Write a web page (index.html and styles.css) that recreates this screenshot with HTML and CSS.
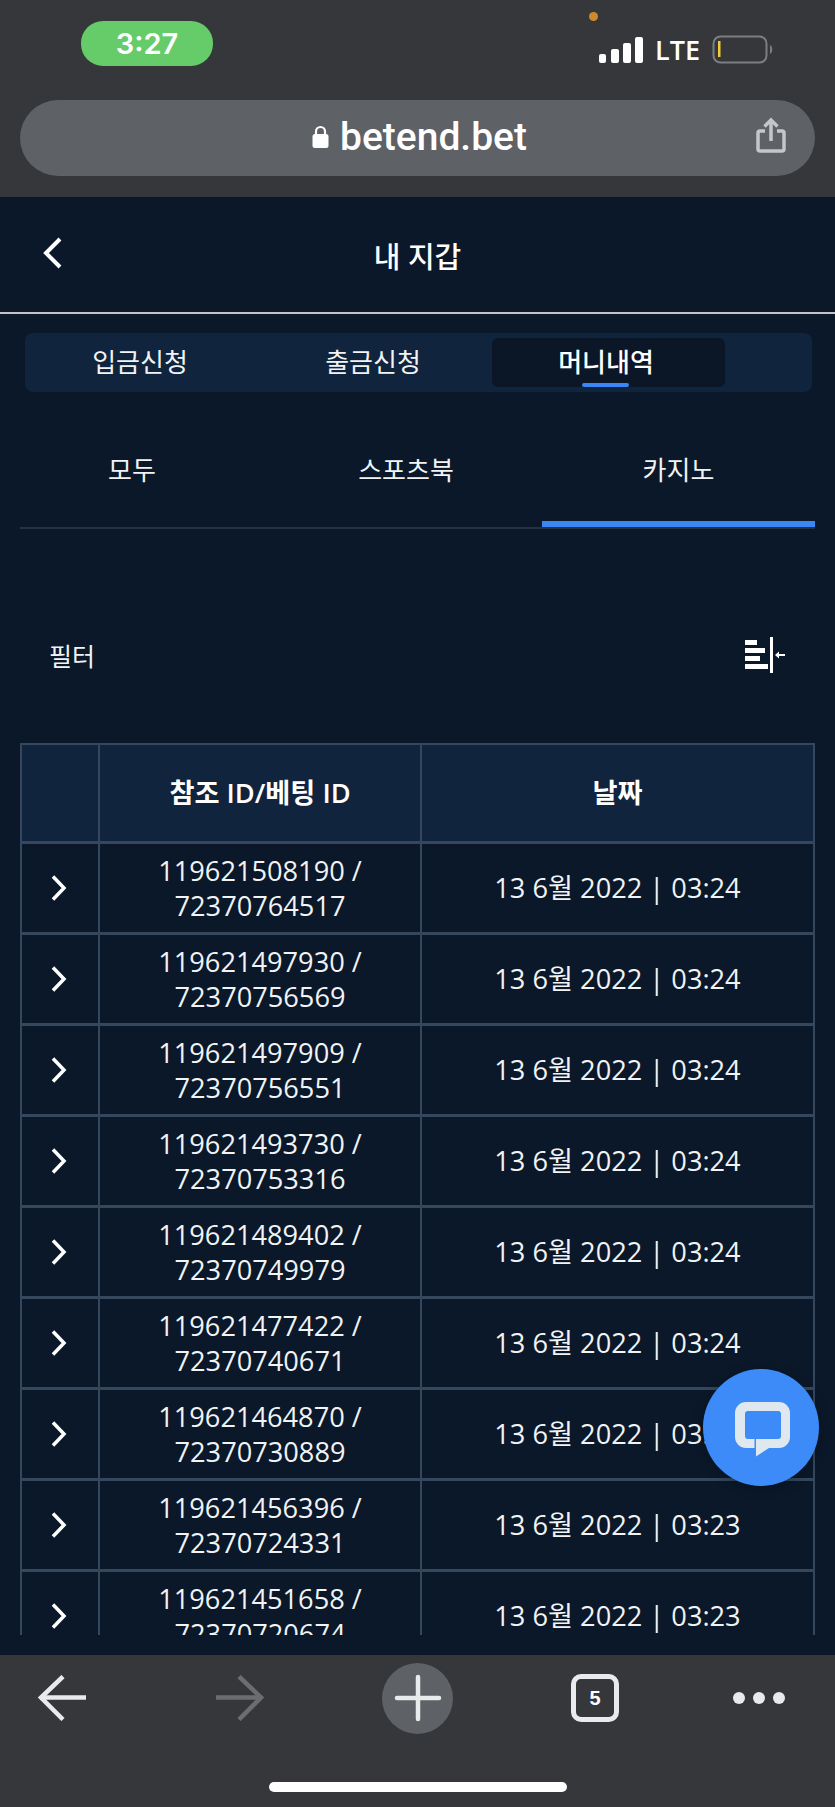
FILE: index.html
```html
<!DOCTYPE html>
<html lang="ko">
<head>
    <meta charset="UTF-8">
    <title>내 지갑</title>
    <link rel="stylesheet" href="styles.css">
</head>
<body>

<div class="browser-top">
    <div class="status">
        <div class="time">3:27</div>
        <div class="status-right">
            <span class="cam-dot"></span>
            <svg class="signal" width="44" height="28" viewBox="0 0 44 28">
                <rect x="0" y="18" width="7" height="9" rx="2"/>
                <rect x="12" y="13" width="8" height="14" rx="2"/>
                <rect x="24" y="7" width="8" height="20" rx="2"/>
                <rect x="36" y="1" width="8" height="26" rx="2"/>
            </svg>
            <span class="lte">LTE</span>
            <svg class="battery" width="62" height="30" viewBox="0 0 62 30">
                <rect x="1.500" y="1.500" width="53" height="26" rx="7" fill="none" stroke="#7d7e80" stroke-width="2"/>
                <rect x="6" y="6" width="2.500" height="16" fill="#f2cb3d"/>
                <path d="M58 10c3 1 3 8 0 9z" fill="#7d7e80"/>
            </svg>
        </div>
    </div>
    <div class="url-bar">
        <svg class="lock" width="17" height="23" viewBox="0 0 17 23">
            <path d="M4 10V6.500a4.500 4.500 0 0 1 9 0V10" fill="none" stroke="#fff" stroke-width="2.200"/>
            <rect x="0.500" y="9" width="16" height="14" rx="2.500" fill="#fff"/>
        </svg>
        <span class="url-text">betend.bet</span>
        <svg class="share" width="30" height="36" viewBox="0 0 30 36" fill="none" stroke="#c3c6ca" stroke-width="3.500">
            <path d="M9 14H4a2 2 0 0 0-2 2v16a2 2 0 0 0 2 2h22a2 2 0 0 0 2-2V16a2 2 0 0 0-2-2H21"/>
            <path d="M15 24V3M8.500 9.500L15 3l6.500 6.500"/>
        </svg>
    </div>
</div>

<div class="page">
    <div class="page-header">
        <svg class="back" width="20" height="32" viewBox="0 0 20 32">
            <path d="M18 2L4 16l14 14" fill="none" stroke="#fff" stroke-width="4"/>
        </svg>
        <h1>내 지갑</h1>
    </div>

    <div class="wallet-tabs">
        <div class="wallet-tab">입금신청</div>
        <div class="wallet-tab">출금신청</div>
        <div class="wallet-tab active">머니내역</div>
    </div>

    <div class="sub-tabs">
        <div class="sub-tab all">모두</div>
        <div class="sub-tab sports">스포츠북</div>
        <div class="sub-tab casino active">카지노</div>
    </div>

    <div class="filter-row">
        <span>필터</span>
        <svg width="40" height="36" viewBox="0 0 40 36">
            <g fill="#fff">
                <rect x="0" y="3" width="12" height="5"/>
                <rect x="0" y="11" width="20" height="5"/>
                <rect x="0" y="19" width="15" height="5"/>
                <rect x="0" y="27" width="23" height="5"/>
                <rect x="25" y="0" width="3" height="36"/>
                <rect x="32" y="17" width="8" height="2"/>
                <path d="M30 18l4-3.500v7z"/>
            </g>
        </svg>
    </div>

    <div class="table-wrap">
        <table>
            <colgroup>
                <col class="col-arrow">
                <col class="col-ref">
                <col class="col-date">
            </colgroup>
            <thead>
                <tr>
                    <th></th>
                    <th>참조 ID/베팅 ID</th>
                    <th>날짜</th>
                </tr>
            </thead>
            <tbody>
                <tr><td><svg class="chev" width="16" height="26" viewBox="0 0 16 26"><path d="M2 1.500L13 13 2 24.500" fill="none" stroke="#fff" stroke-width="3.500"/></svg></td><td>119621508190 /<br>72370764517</td><td>13 6월 2022 | 03:24</td></tr>
                <tr><td><svg class="chev" width="16" height="26" viewBox="0 0 16 26"><path d="M2 1.500L13 13 2 24.500" fill="none" stroke="#fff" stroke-width="3.500"/></svg></td><td>119621497930 /<br>72370756569</td><td>13 6월 2022 | 03:24</td></tr>
                <tr><td><svg class="chev" width="16" height="26" viewBox="0 0 16 26"><path d="M2 1.500L13 13 2 24.500" fill="none" stroke="#fff" stroke-width="3.500"/></svg></td><td>119621497909 /<br>72370756551</td><td>13 6월 2022 | 03:24</td></tr>
                <tr><td><svg class="chev" width="16" height="26" viewBox="0 0 16 26"><path d="M2 1.500L13 13 2 24.500" fill="none" stroke="#fff" stroke-width="3.500"/></svg></td><td>119621493730 /<br>72370753316</td><td>13 6월 2022 | 03:24</td></tr>
                <tr><td><svg class="chev" width="16" height="26" viewBox="0 0 16 26"><path d="M2 1.500L13 13 2 24.500" fill="none" stroke="#fff" stroke-width="3.500"/></svg></td><td>119621489402 /<br>72370749979</td><td>13 6월 2022 | 03:24</td></tr>
                <tr><td><svg class="chev" width="16" height="26" viewBox="0 0 16 26"><path d="M2 1.500L13 13 2 24.500" fill="none" stroke="#fff" stroke-width="3.500"/></svg></td><td>119621477422 /<br>72370740671</td><td>13 6월 2022 | 03:24</td></tr>
                <tr><td><svg class="chev" width="16" height="26" viewBox="0 0 16 26"><path d="M2 1.500L13 13 2 24.500" fill="none" stroke="#fff" stroke-width="3.500"/></svg></td><td>119621464870 /<br>72370730889</td><td>13 6월 2022 | 03:24</td></tr>
                <tr><td><svg class="chev" width="16" height="26" viewBox="0 0 16 26"><path d="M2 1.500L13 13 2 24.500" fill="none" stroke="#fff" stroke-width="3.500"/></svg></td><td>119621456396 /<br>72370724331</td><td>13 6월 2022 | 03:23</td></tr>
                <tr><td><svg class="chev" width="16" height="26" viewBox="0 0 16 26"><path d="M2 1.500L13 13 2 24.500" fill="none" stroke="#fff" stroke-width="3.500"/></svg></td><td>119621451658 /<br>72370720674</td><td>13 6월 2022 | 03:23</td></tr>
            </tbody>
        </table>
    </div>

    <div class="chat-btn">
        <svg width="55" height="55" viewBox="0 0 55 55">
            <path fill-rule="evenodd" fill="#dfe7ef" d="M11 0h33a11 11 0 0 1 11 11v24a11 11 0 0 1-11 11H34L21 54.500V37h-1.500v9H11A11 11 0 0 1 0 35V11A11 11 0 0 1 11 0zM13 9a3 3 0 0 0-3 3v22a3 3 0 0 0 3 3h30a3 3 0 0 0 3-3V12a3 3 0 0 0-3-3z"/>
        </svg>
    </div>
</div>

<div class="browser-bottom">
    <div class="toolbar">
        <svg width="50" height="46" viewBox="0 0 50 46" fill="none" stroke="#e9eaec" stroke-width="4.500">
            <path d="M49 22.500H5"/><path d="M26 1.500L4 22.500 26 44.500"/>
        </svg>
        <svg class="tb-forward" width="50" height="46" viewBox="0 0 50 46" fill="none" stroke="#6c6d70" stroke-width="4.500">
            <path d="M2 22.500h44"/><path d="M25 1.500L47 22.500 25 44.500"/>
        </svg>
        <div class="plus-btn">
            <svg width="48" height="48" viewBox="0 0 48 48" fill="none" stroke="#e9eaec" stroke-width="4.500" stroke-linecap="round">
                <path d="M24 3v42M3 24h42"/>
            </svg>
        </div>
        <div class="tab-count">5</div>
        <div class="more"><span></span><span></span><span></span></div>
    </div>
    <div class="home-bar"></div>
</div>

</body>
</html>
```

FILE: styles.css
```css
* {
    box-sizing: border-box;
}
body {
    margin: 0;
    width: 835px;
    height: 1807px;
    overflow: hidden;
    display: flex;
    flex-direction: column;
    font-family: "Open Sans", "Noto Sans CJK KR", sans-serif;
    color: #f1f3f5;
    background: #0a1829;
}

/* browser chrome */
.browser-top {
    height: 197px;
    padding: 21px 20px 0;
    background: #36373a;
    color: #fff;
}
.status {
    height: 79px;
    display: flex;
    justify-content: space-between;
    align-items: flex-start;
    padding-left: 61px;
}
.time {
    width: 132px;
    height: 45px;
    border-radius: 22px;
    background: #66cc6a;
    font: 600 29px/46px Inter, sans-serif;
    text-align: center;
}
.status-right {
    position: relative;
    display: flex;
    align-items: center;
    gap: 12px;
    padding-top: 14px;
    padding-right: 41px;
}
.cam-dot {
    position: absolute;
    left: -10px;
    top: -9px;
    width: 9px;
    height: 9px;
    border-radius: 50%;
    background: #cd8a2d;
}
.signal {
    fill: #fff;
}
.lte {
    font: 600 27px/28px "Open Sans", sans-serif;
}
.url-bar {
    position: relative;
    height: 76px;
    padding: 0 0 3px 4px;
    border-radius: 38px;
    background: #5e6165;
    display: flex;
    align-items: center;
    justify-content: center;
    gap: 11px;
}
.url-text {
    font: 500 39px/46px Roboto, sans-serif;
}
.share {
    position: absolute;
    right: 29px;
    top: 17px;
}

/* page */
.page {
    position: relative;
    height: 1458px;
    display: flex;
    flex-direction: column;
}
.page-header {
    position: relative;
    height: 117px;
    border-bottom: 2px solid #c0c4c8;
    display: flex;
    align-items: center;
    justify-content: center;
    flex-shrink: 0;
    color: #fff;
}
.page-header h1 {
    margin: 0;
    font-size: 29px;
    font-weight: 500;
}
.back {
    position: absolute;
    left: 42px;
    top: 40px;
}
.wallet-tabs {
    margin: 19px 23px 0 25px;
    height: 59px;
    flex-shrink: 0;
    padding: 5px 0 5px 1px;
    display: flex;
    border-radius: 8px;
    background: #10243d;
}
.wallet-tab {
    width: 233px;
    padding-right: 5px;
    font-size: 26px;
    line-height: 48px;
    text-align: center;
}
.wallet-tab.active {
    position: relative;
    background: #0b1626;
    border-radius: 6px;
    font-weight: 500;
    color: #fff;
}
.wallet-tab.active::after {
    content: "";
    position: absolute;
    left: 90px;
    bottom: 0;
    width: 47px;
    height: 4px;
    border-radius: 2px;
    background: #3a86f7;
}
.sub-tabs {
    margin: 0 20px;
    height: 137px;
    flex-shrink: 0;
    display: flex;
    border-bottom: 2px solid #243243;
}
.sub-tab {
    padding-top: 58px;
    font-size: 26px;
    line-height: 40px;
    text-align: center;
}
.sub-tab.all {
    width: 224px;
    margin-right: 26px;
}
.sub-tab.sports {
    width: 272px;
}
.sub-tab.casino {
    width: 273px;
}
.sub-tab.active {
    border-bottom: 6px solid #3a86f7;
}
.filter-row {
    height: 214px;
    flex-shrink: 0;
    padding: 38px 50px 0 49px;
    display: flex;
    justify-content: space-between;
    align-items: center;
    font-size: 25px;
}

/* table */
.table-wrap {
    height: 892px;
    margin: 0 20px;
    overflow: hidden;
    flex-shrink: 0;
}
table {
    width: 795px;
    table-layout: fixed;
    border-collapse: collapse;
}
.col-arrow {
    width: 78px;
}
.col-ref {
    width: 322px;
}
th, td {
    border: 2px solid #35475c;
    text-align: center;
    padding: 0 6px;
    font-size: 27.2px;
    line-height: 35px;
}
th {
    height: 98px;
    background: #10243d;
    font-weight: 600;
    color: #fff;
}
td {
    height: 91px;
    border-top-width: 3px;
    border-bottom-width: 3px;
    background: #0a1829;
}
tbody td:first-child {
    padding: 0;
}
.chev {
    display: block;
    margin: 0 0 0 29px;
}
.chat-btn {
    position: absolute;
    left: 703px;
    top: 1172px;
    width: 116px;
    height: 117px;
    border-radius: 50%;
    background: #3d8bf8;
    display: flex;
    align-items: center;
    justify-content: center;
    box-shadow: 0 2px 12px rgba(0, 0, 0, 0.25);
}
.chat-btn svg {
    margin: 3px 0 0 2px;
}

/* bottom toolbar */
.browser-bottom {
    flex: 1;
    background: #36373a;
    position: relative;
    color: #fff;
}
.toolbar {
    display: flex;
    align-items: center;
    padding-left: 37px;
    height: 86px;
}
.tb-forward {
    margin-left: 127px;
}
.plus-btn {
    margin-left: 118px;
    width: 71px;
    height: 71px;
    border-radius: 50%;
    background: #5e6165;
    display: flex;
    align-items: center;
    justify-content: center;
}
.tab-count {
    margin-left: 118px;
    width: 48px;
    height: 48px;
    border: 5px solid #e9eaec;
    border-radius: 10px;
    font: 700 20px/38px "Liberation Sans", sans-serif;
    text-align: center;
}
.more {
    margin-left: 114px;
    display: flex;
    gap: 8px;
}
.more span {
    width: 12px;
    height: 12px;
    border-radius: 50%;
    background: #e9eaec;
}
.home-bar {
    position: absolute;
    left: 269px;
    top: 127px;
    width: 298px;
    height: 10px;
    border-radius: 5px;
    background: #fff;
}
```
